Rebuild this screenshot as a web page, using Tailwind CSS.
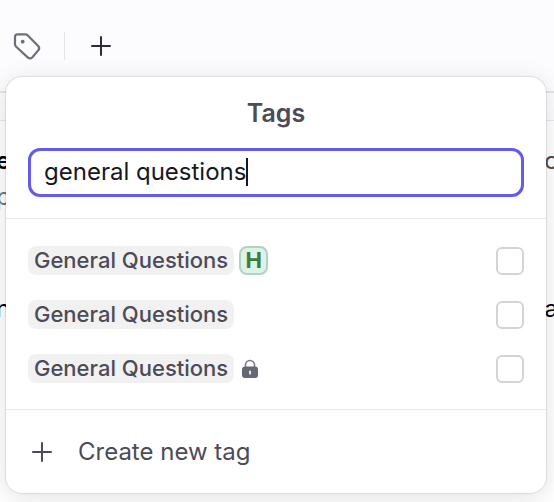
<!DOCTYPE html>
<html lang="en">
<head>
<meta charset="utf-8">
<meta name="viewport" content="width=device-width, initial-scale=1">
<title>Tags</title>
<script src="https://cdn.jsdelivr.net/npm/@tailwindcss/browser@4"></script>
</head>
<body class="relative min-h-screen overflow-hidden bg-white font-['Inter','Liberation_Sans',sans-serif] text-[#4c4b57]">
  <header class="flex h-[93px] items-center border-b-2 border-[#e4e4e7] bg-[#fcfcfe] pl-3">
    <button type="button" aria-label="Tags" class="flex size-8 items-center justify-center text-[#6b6f7a]">
      <svg class="size-8" viewBox="0 0 32 32" fill="none" stroke="currentColor" stroke-width="2.200" stroke-linejoin="round">
        <path d="M5.500 4.300H13.500Q14.700 4.300 15.600 5.200L26.200 16Q28.200 18.200 26.200 20.400L20.400 27.200Q18 29.500 15.700 27.400L4.200 16.800Q3 15.600 3 14.200V6.800Q3 4.300 5.500 4.300Z"/>
        <circle cx="10.700" cy="11.700" r="1.900" fill="currentColor" stroke="none"/>
      </svg>
    </button>
    <span class="ml-5 h-7 w-px bg-[#e4e4e8]"></span>
    <button type="button" aria-label="Add" class="ml-5 flex size-8 items-center justify-center text-[#2f2a3a]">
      <svg class="size-5" viewBox="0 0 20 20" fill="none" stroke="currentColor" stroke-width="2" stroke-linecap="round"><path d="M10 1v18M1 10h18"/></svg>
    </button>
  </header>
  <div class="h-7 border-b border-[#e8e8ea] bg-[#fcfcfe]"></div>
  <main class="pt-6 text-2xl text-black">
    <div class="flex h-8 items-center justify-between"><b class="-ml-1 font-semibold">e</b><span class="-mr-1 text-[#4c4b57]">c</span></div>
    <div class="-ml-1 mt-1 h-8 text-[#777580]">p</div>
    <div class="mt-20 flex h-8 items-center justify-between"><span class="-ml-1">n</span><span class="-mr-1">a</span></div>
  </main>

  <section aria-labelledby="title" class="absolute top-[77px] right-2 left-[6px] rounded-2xl bg-white shadow-[0_0_0_1px_rgba(0,0,0,0.08),0_4px_24px_rgba(0,0,0,0.12)]">
    <div class="border-b border-[#e9e9ec] px-[22px] pt-5 pb-[21px]">
      <h1 id="title" class="text-center text-[25px] leading-8 font-semibold">Tags</h1>
      <div class="relative mt-[19px]">
        <input type="text" aria-label="Search tags" value="general questions" class="block h-[49px] w-full rounded-xl border-[3px] border-[#655bea] px-[13px] pb-[2px] text-2xl text-[#18171f] outline-none">
        <span class="absolute top-[10px] left-[218px] h-7 w-[2px] bg-[#18171f]"></span>
      </div>
    </div>
    <ul class="flex flex-col gap-[25px] border-b border-[#e9e9ec] px-[22px] pt-[27px] pb-[26px] text-[22px] font-medium">
      <li><label class="flex h-[29px] items-center">
        <span class="rounded-lg bg-[#f1f1f1] px-[6px] leading-[29px]">General Questions</span>
        <span class="ml-[5px] flex h-[29px] w-[29px] items-center justify-center rounded-lg border-2 border-[#b4d2c3] bg-[#ddf3e5] font-bold text-[#3c7d3c]">H</span>
        <input type="checkbox" class="ml-auto size-7 appearance-none rounded-md border-2 border-[#d4d4d5] bg-white">
      </label></li>
      <li><label class="flex h-[29px] items-center">
        <span class="rounded-lg bg-[#f1f1f1] px-[6px] leading-[29px]">General Questions</span>
        <input type="checkbox" class="ml-auto size-7 appearance-none rounded-md border-2 border-[#d4d4d5] bg-white">
      </label></li>
      <li><label class="flex h-[29px] items-center">
        <span class="rounded-lg bg-[#f1f1f1] px-[6px] leading-[29px]">General Questions</span>
        <svg class="ml-[7px] h-5 w-[18px]" viewBox="0 0 18 20" fill="none">
          <path d="M4.500 8V6a4.500 4.500 0 0 1 9 0v2" stroke="#777a84" stroke-width="1.600"/>
          <rect x="1" y="7.500" width="16" height="11.500" rx="3" fill="#666873"/>
          <rect x="8.200" y="11.500" width="1.700" height="4" rx=".8" fill="#fff"/>
        </svg>
        <input type="checkbox" class="ml-auto size-7 appearance-none rounded-md border-2 border-[#d4d4d5] bg-white">
      </label></li>
    </ul>
    <button type="button" class="flex h-[83px] w-full items-center px-[26px] text-2xl">
      <svg class="size-5" viewBox="0 0 20 20" fill="none" stroke="currentColor" stroke-width="2" stroke-linecap="round"><path d="M10 1v18M1 10h18"/></svg>
      <span class="ml-[26px]">Create new tag</span>
    </button>
  </section>
</body>
</html>
